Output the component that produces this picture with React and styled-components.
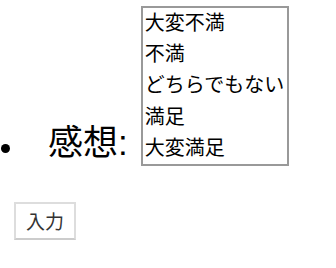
import React, { useState } from "react";
import styled, { createGlobalStyle } from "styled-components";

const GlobalStyle = createGlobalStyle`
    body {
        margin: 0;
        background: #fff;
        font-family: "Liberation Sans", "Noto Sans CJK JP", sans-serif;
        color: #000;
    }
`;

const Form = styled.form`
    padding-top: 6px;
`;

const List = styled.ul`
    margin: 0;
    padding: 0 0 0 1px;
    list-style: none;
`;

const Item = styled.li`
    font-size: 35px;
    line-height: 1;
`;

const Bullet = styled.span`
    display: inline-block;
    width: 9px;
    height: 9px;
    margin-right: 38px;
    border-radius: 50%;
    background: #000;
    vertical-align: 2px;
`;

const Label = styled.span`
    margin-right: 13px;
`;

const ListBox = styled.div`
    display: inline-block;
    vertical-align: baseline;
    width: 144px;
    border: 2px solid #999;
    font-size: 20px;
    background: #fff;
`;

const Option = styled.div`
    height: 31.2px;
    line-height: 31.2px;
    padding-left: 2px;
    white-space: nowrap;
    cursor: default;
    background: ${p => (p.$selected ? "#cde" : "transparent")};
`;

const ButtonRow = styled.div`
    padding: 36px 0 0 14px;
`;

const SubmitButton = styled.button`
    width: 62px;
    height: 38px;
    padding: 0;
    border: 2px solid #ddd;
    border-bottom-color: #ccc;
    background: #fff;
    color: #333;
    font-family: "Liberation Sans", "Noto Sans CJK JP", sans-serif;
    font-size: 19px;
    cursor: pointer;
`;

const options = ["大変不満", "不満", "どちらでもない", "満足", "大変満足"];

export default function App() {
    const [selected, setSelected] = useState([]);

    function handlerOnClickOption(opt) {
        setSelected(prev => (prev.includes(opt) ? prev.filter(o => o !== opt) : [...prev, opt]));
    }

    return (
        <>
            <GlobalStyle />
            <Form onSubmit={e => e.preventDefault()}>
                <List>
                    <Item>
                        <Bullet />
                        <Label>感想:</Label>
                        <ListBox role="listbox" aria-multiselectable="true">
                            {options.map(opt => (
                                <Option
                                    key={opt}
                                    role="option"
                                    $selected={selected.includes(opt)}
                                    onClick={() => handlerOnClickOption(opt)}>
                                    {opt}
                                </Option>
                            ))}
                        </ListBox>
                    </Item>
                </List>
                <ButtonRow>
                    <SubmitButton type="submit">入力</SubmitButton>
                </ButtonRow>
            </Form>
        </>
    );
}
